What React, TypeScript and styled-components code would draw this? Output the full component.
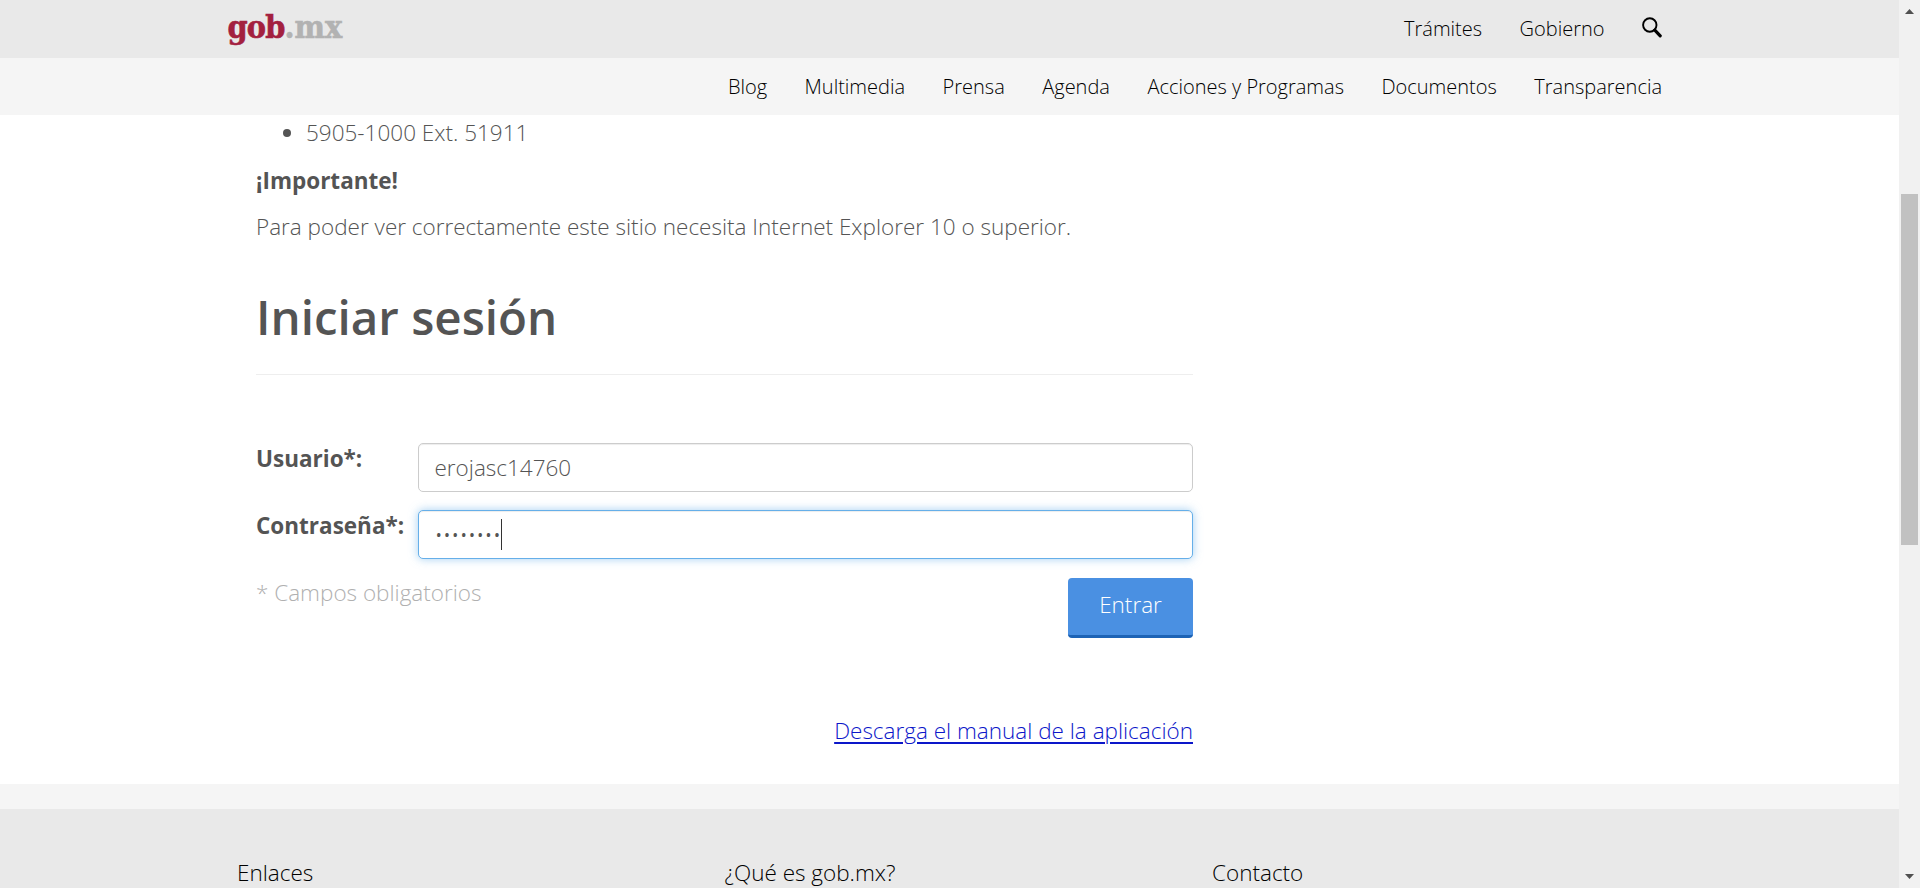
import React from "react";
import styled, { createGlobalStyle } from "styled-components";

const GlobalStyle = createGlobalStyle`
  *, *::before, *::after { box-sizing: border-box; }
  body {
    margin: 0;
    overflow: hidden;
    background: #fff;
    color: #545454;
    font-family: "Open Sans", "Noto Sans", sans-serif;
    font-size: 22.5px;
    font-weight: 300;
    line-height: 32px;
  }
`;

const Page = styled.div`
  display: grid;
  grid-template-columns: 1fr 21px;
  height: 888px;
  overflow: hidden;
`;

const Site = styled.div`
  min-width: 0;
  height: 888px;
  overflow: hidden;
`;

const Bar = styled.div<{ $color: string; $height: number }>`
  height: ${(p) => p.$height}px;
  background: ${(p) => p.$color};
`;

const Container = styled.div`
  width: 1462px;
  height: 100%;
  margin: 0 auto;
  padding: 0 18.5px 0 9px;
  display: flex;
  align-items: center;
`;

const Logo = styled.div`
  display: flex;
  padding-bottom: 4px;
  font-family: "DejaVu Serif Condensed", "DejaVu Serif", serif;
  font-stretch: condensed;
  font-size: 32px;
  font-weight: 700;
  line-height: 40px;
`;

const LogoPart = styled.span<{ $color: string; $spacing: number }>`
  color: ${(p) => p.$color};
  letter-spacing: ${(p) => p.$spacing}px;
  -webkit-text-stroke: 0.6px ${(p) => p.$color};
`;

const Nav = styled.nav`
  margin-left: auto;
  display: flex;
  align-items: center;
  gap: 37.5px;
`;

const NavLink = styled.a`
  color: #000;
  font-size: 20px;
  line-height: 28px;
  white-space: nowrap;
`;

const SearchIcon = styled.svg`
  display: block;
  width: 20px;
  height: 21px;
  margin-top: -4px;
`;

const Main = styled.main`
  height: 669px;
  width: 937px;
  margin-left: 256px;
  padding-top: 2px;
`;

const PhoneList = styled.ul`
  margin: 0 0 16px;
  padding-left: 50px;
`;

const Text = styled.p`
  margin: 0 0 14px;
`;

const Strong = styled.strong`
  font-weight: 700;
`;

const Title = styled.h2`
  margin: 0;
  padding: 29px 0 26px;
  font-size: 47.5px;
  font-weight: 600;
  line-height: 62px;
  border-bottom: 1px solid #eee;
`;

const Form = styled.form`
  padding-top: 68px;
`;

const Field = styled.div`
  display: grid;
  grid-template-columns: 162px 1fr;
  margin-bottom: 18px;
`;

const Label = styled.label`
  font-weight: 700;
  white-space: nowrap;
`;

const Input = styled.div<{ $focused?: boolean }>`
  display: flex;
  align-items: center;
  height: 49px;
  padding: 0 15.5px;
  background: #fff;
  border: 1px solid ${(p) => (p.$focused ? "#66afe9" : "#ccc")};
  border-radius: 5px;
  box-shadow: ${(p) =>
    p.$focused
      ? "inset 0 1px 1px rgba(0,0,0,.075), 0 0 10px rgba(102,175,233,.6)"
      : "inset 0 1px 1px rgba(0,0,0,.075)"};
`;

const Password = styled.span`
  letter-spacing: -0.15px;
`;

const Caret = styled.span`
  width: 1px;
  height: 31px;
  background: #333;
`;

const Actions = styled.div`
  display: flex;
  justify-content: space-between;
  align-items: flex-start;
  padding-top: 1px;
`;

const Hint = styled.span`
  margin-top: -1px;
  color: #b0b0b0;
`;

const Submit = styled.button`
  width: 125px;
  height: 60px;
  padding: 0 0 3px;
  border: 0;
  border-bottom: 3px solid #1d63b5;
  border-radius: 4px;
  background: #4a90e2;
  color: #fff;
  font: inherit;
`;

const Manual = styled.div`
  padding-top: 77px;
  text-align: right;
`;

const ManualLink = styled.a`
  color: #0c17c9;
  text-decoration: underline;
  text-decoration-thickness: 2px;
  text-underline-offset: 2.5px;
`;

const Footer = styled.footer`
  height: 79px;
  padding: 48px 0 0 237px;
  background: #e9e9e9;
  color: #000;
  display: grid;
  grid-template-columns: 487.5px 487.5px 1fr;
`;

const ScrollTrack = styled.div`
  height: 888px;
  background: #f1f1f1;
  display: flex;
  flex-direction: column;
  align-items: center;
`;

const ScrollArrow = styled.svg`
  display: block;
  width: 21px;
  height: 21px;
`;

const ScrollThumb = styled.div`
  width: 17px;
  height: 351px;
  margin: 173px 0 auto;
  background: #c1c1c1;
`;

const sections = ["Blog", "Multimedia", "Prensa", "Agenda", "Acciones y Programas", "Documentos", "Transparencia"];

export default function App() {
  return (
    <>
      <GlobalStyle />
      <Page>
        <Site>
          <Bar $color="#e9e9e9" $height={58}>
            <Container>
              <Logo>
                <LogoPart $color="#a3203f" $spacing={-0.8}>gob</LogoPart>
                <LogoPart $color="#b2b2b2" $spacing={0}>.mx</LogoPart>
              </Logo>
              <Nav>
                <NavLink>Trámites</NavLink>
                <NavLink>Gobierno</NavLink>
                <SearchIcon viewBox="0 0 20 21" fill="none" stroke="#000">
                  <circle cx="7.8" cy="8" r="6.7" strokeWidth="1.9" />
                  <path d="M12.8 13.2L18.2 18.8" strokeWidth="3.2" strokeLinecap="round" />
                </SearchIcon>
              </Nav>
            </Container>
          </Bar>
          <Bar $color="#f5f5f5" $height={57}>
            <Container>
              <Nav>
                {sections.map((name) => (
                  <NavLink key={name}>{name}</NavLink>
                ))}
              </Nav>
            </Container>
          </Bar>
          <Main>
            <PhoneList>
              <li>5905-1000 Ext. 51911</li>
            </PhoneList>
            <Text>
              <Strong>¡Importante!</Strong>
            </Text>
            <Text>Para poder ver correctamente este sitio necesita Internet Explorer 10 o superior.</Text>
            <Title>Iniciar sesión</Title>
            <Form>
              <Field>
                <Label>Usuario*:</Label>
                <Input>erojasc14760</Input>
              </Field>
              <Field>
                <Label>Contraseña*:</Label>
                <Input $focused>
                  <Password>••••••••</Password>
                  <Caret />
                </Input>
              </Field>
              <Actions>
                <Hint>* Campos obligatorios</Hint>
                <Submit type="button">Entrar</Submit>
              </Actions>
            </Form>
            <Manual>
              <ManualLink>Descarga el manual de la aplicación</ManualLink>
            </Manual>
          </Main>
          <Bar $color="#f5f5f5" $height={25} />
          <Footer>
            <span>Enlaces</span>
            <span>¿Qué es gob.mx?</span>
            <span>Contacto</span>
          </Footer>
        </Site>
        <ScrollTrack>
          <ScrollArrow viewBox="0 0 21 21" fill="#505050">
            <path d="M6 14L10.5 9L15 14Z" />
          </ScrollArrow>
          <ScrollThumb />
          <ScrollArrow viewBox="0 0 21 21" fill="#505050">
            <path d="M6 7L10.5 12L15 7Z" />
          </ScrollArrow>
        </ScrollTrack>
      </Page>
    </>
  );
}
